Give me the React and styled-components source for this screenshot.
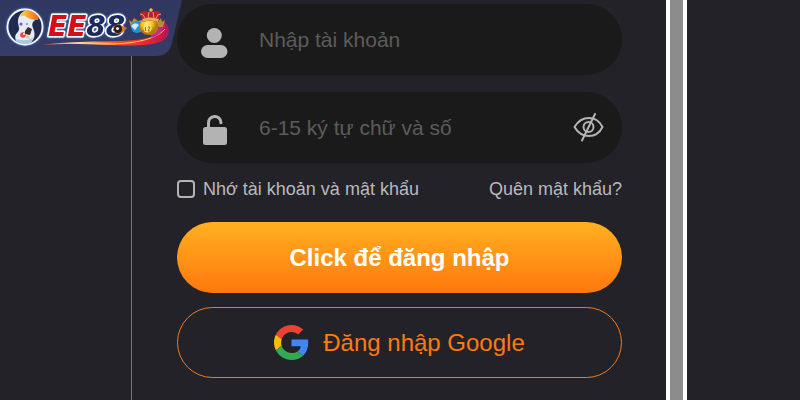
import React, { useState } from 'react';
import styled, { createGlobalStyle } from 'styled-components';

const GlobalStyle = createGlobalStyle`
  * {
    box-sizing: border-box;
  }
  body {
    margin: 0;
    background: #232228;
    font-family: "Liberation Sans", Arial, sans-serif;
  }
`;

const Page = styled.div`
  display: grid;
  grid-template-columns: 132fr 534fr 21px 113fr;
  min-height: 100vh;
  background: #232228;
`;

const Side = styled.aside`
  border-right: ${(props) => (props.$line ? '1px solid #77767a' : 'none')};
`;

const ScrollBar = styled.div`
  background: #8c8c8c;
  border: solid #fff;
  border-width: 0 4px;
`;

const Brand = styled.a`
  position: absolute;
  top: 0;
  left: 0;

  svg {
    display: block;
  }
`;

const Form = styled.form`
  display: flex;
  flex-direction: column;
  padding: 4px 44px 20px 45px;
`;

const Field = styled.div`
  display: flex;
  align-items: center;
  height: 71px;
  margin-bottom: 17px;
  padding: 0 17px 0 22px;
  border-radius: 36px;
  background: #1a1a1a;
`;

const FieldLabel = styled.label`
  display: flex;
  flex: none;
  width: 60px;
`;

const Input = styled.input`
  flex: 1;
  min-width: 0;
  padding: 0;
  border: none;
  outline: none;
  background: transparent;
  color: #ccc;
  font: 21px "Liberation Sans", Arial, sans-serif;

  &::placeholder {
    color: #5c5c5c;
    opacity: 1;
  }
`;

const IconButton = styled.button`
  display: flex;
  padding: 0;
  border: none;
  background: none;
  cursor: pointer;
`;

const Options = styled.div`
  display: flex;
  align-items: center;
  justify-content: space-between;
  margin-bottom: 24px;
  color: #b9b9bc;
  font-size: 18px;
  line-height: 18px;
`;

const Remember = styled.label`
  display: flex;
  align-items: center;
  gap: 8px;
`;

const Checkbox = styled.input`
  appearance: none;
  width: 18px;
  height: 18px;
  margin: 0;
  border: 2px solid #b4b4b6;
  border-radius: 4px;

  &:checked {
    background: #ff8a12;
  }
`;

const ForgotLink = styled.a`
  color: inherit;
  text-decoration: none;
`;

const Button = styled.button`
  display: flex;
  align-items: center;
  justify-content: center;
  gap: 14px;
  height: 71px;
  margin-bottom: 14px;
  border: none;
  border-radius: 36px;
  font: 24px "Liberation Sans", Arial, sans-serif;
  cursor: pointer;
`;

const LoginButton = styled(Button)`
  background: linear-gradient(#ffb020, #ff780e);
  color: #fff;
  font-weight: bold;
`;

const GoogleButton = styled(Button)`
  border: 1px solid #f0791c;
  background: transparent;
  color: #ff7a10;
`;

const UserIcon = () => (
  <svg width="32" height="38" viewBox="0 0 32 38" fill="#b3b3b3">
    <circle cx="15.300" cy="14.500" r="7.500" />
    <rect x="2" y="24" width="26.500" height="13" rx="6.500" />
  </svg>
);

const LockIcon = () => (
  <svg width="32" height="38" viewBox="0 0 32 38">
    <path
      d="M9.500 20V14a6.200 6.200 0 0 1 12.400-.8v.5"
      fill="none"
      stroke="#b3b3b3"
      strokeWidth="3"
      strokeLinecap="round"
    />
    <rect x="4" y="18" width="24" height="18" rx="2.500" fill="#b3b3b3" />
  </svg>
);

const EyeIcon = () => (
  <svg width="32" height="34" viewBox="0 0 32 34" fill="none" stroke="#b4b4b4" strokeWidth="2" strokeLinecap="round">
    <path d="M1.500 16C8.500 4 23.500 4 29.500 16C23.500 28 8.500 28 1.500 16Z" strokeLinejoin="round" />
    <circle cx="15.500" cy="16" r="5" />
    <path d="M22 3L9 29.500" />
  </svg>
);

const GoogleIcon = () => (
  <svg width="35" height="35" viewBox="0 0 48 48">
    <path fill="#ea4335" d="M24 9.500c3.540 0 6.710 1.220 9.210 3.600l6.850-6.850C35.900 2.380 30.470 0 24 0 14.620 0 6.510 5.380 2.560 13.220l7.980 6.190C12.430 13.720 17.740 9.500 24 9.500z" />
    <path fill="#4285f4" d="M46.980 24.550c0-1.570-.15-3.090-.38-4.550H24v9.020h12.940c-.58 2.960-2.260 5.480-4.780 7.180l7.730 6c4.510-4.180 7.090-10.360 7.090-17.650z" />
    <path fill="#fbbc05" d="M10.530 28.590c-.48-1.450-.76-2.990-.76-4.590s.27-3.140.76-4.590l-7.980-6.190C.92 16.460 0 20.120 0 24c0 3.880.92 7.540 2.560 10.780l7.970-6.190z" />
    <path fill="#34a853" d="M24 48c6.480 0 11.930-2.130 15.890-5.810l-7.730-6c-2.150 1.450-4.920 2.300-8.160 2.300-6.260 0-11.570-4.220-13.470-9.910l-7.980 6.190C6.510 42.620 14.620 48 24 48z" />
  </svg>
);

const Logo = () => (
  <svg width="190" height="58" viewBox="0 0 190 58">
    <defs>
      <linearGradient id="plate" x2="0" y2="1">
        <stop offset="0" stopColor="#303760" />
        <stop offset="1" stopColor="#353d68" />
      </linearGradient>
      <linearGradient id="swoosh">
        <stop offset="0" stopColor="#ef5a22" />
        <stop offset="0.300" stopColor="#ffd49a" />
        <stop offset="0.600" stopColor="#f4511e" />
        <stop offset="0.850" stopColor="#e52235" />
        <stop offset="1" stopColor="#b31656" />
      </linearGradient>
      <linearGradient id="cap">
        <stop offset="0.200" stopColor="#ffc02e" />
        <stop offset="1" stopColor="#ef5a1c" />
      </linearGradient>
      <radialGradient id="gold" cx="0.400" cy="0.300">
        <stop offset="0" stopColor="#fff27a" />
        <stop offset="0.600" stopColor="#f2bd18" />
        <stop offset="1" stopColor="#b87708" />
      </radialGradient>
      <clipPath id="disc">
        <circle cx="25" cy="27" r="17" />
      </clipPath>
      <filter id="glow" x="-20%" y="-20%" width="140%" height="140%">
        <feDropShadow dx="0" dy="0" stdDeviation="1.300" floodColor="#4fa4ff" />
      </filter>
    </defs>

    <path d="M0 0H182L172 43Q169 56 156 56H0Z" fill="url(#plate)" />

    {/* mascot badge */}
    <circle cx="25" cy="27" r="17.500" fill="#222a50" stroke="#f4faff" strokeWidth="1.800" filter="url(#glow)" />
    <g clipPath="url(#disc)">
      <path d="M18 22C18 12 27 7 39 12L38 18C33 21 31 23 33 28C37 37 33 44 23 44C16 44 13 37 17 33C21 29 18 26 18 22Z" fill="#e5ebf5" />
      <path d="M20 17C23 9 31 7 40 14L38 20Q29 20 25 16Q23 15 20 17Z" fill="url(#cap)" />
      <circle cx="21" cy="24" r="1.600" fill="#7c55c6" />
      <circle cx="27" cy="24" r="1" fill="#5b98c4" />
      <path d="M25 31L28 27L32 29L30 35L25 34Z" fill="#392b32" />
      <circle cx="23" cy="35" r="2.800" fill="#e8483c" />
      <circle cx="28" cy="37" r="2" fill="#f0c7a8" />
      <circle cx="24" cy="34" r="1" fill="#fff" />
      <path d="M16 39Q25 42 33 38L31 44H18Z" fill="#a9c8e6" />
    </g>

    {/* comet tail */}
    <path d="M42 45C82 39 122 44 147 38C160 34 166 28 162 20C171 25 172 37 160 42C137 50 91 41 42 45Z" fill="url(#swoosh)" />
    <path d="M85 43C122 46 154 42 165 29" fill="none" stroke="#ffce4f" strokeWidth="1" />
    <path d="M151 36Q161 33 162 24" fill="none" stroke="#bd2b9a" strokeWidth="4" />

    <text
      x="48"
      y="36"
      fontFamily="DejaVu Sans, sans-serif"
      fontWeight="bold"
      fontStyle="italic"
      fontSize="28"
      stroke="#fff"
      strokeWidth="3"
      strokeLinejoin="round"
      paintOrder="stroke"
      filter="url(#glow)"
    >
      <tspan fill="#d90d14">EE</tspan>
      <tspan fill="#1d2a5f">88</tspan>
    </text>

    <path d="M113 27L118 24L127 28L122 33L116 34Z" fill="#d17624" />
    <circle cx="118" cy="29" r="4" fill="#251b20" />
    <circle cx="117.500" cy="28.500" r="1.600" fill="#e9e1d7" />

    {/* crown and balls */}
    <path d="M129 20L132 22L134 18L138 21L142 20V27H131Z" fill="#c68d3f" />
    <path d="M155 21L158 22L161 18L162 22L165 20L163 27H155Z" fill="#bd8b3e" />
    <circle cx="137" cy="27" r="6" fill="#1e94df" />
    <path d="M131 26Q135 21 139 25L135 30Z" fill="#c5efff" />
    <ellipse cx="149" cy="27" rx="9.500" ry="8" fill="url(#gold)" />
    <circle cx="147.500" cy="28.500" r="4" fill="#ffe36a" />
    <path d="M145.500 27V31M148 27H150L148 31H150" fill="none" stroke="#9c7317" strokeWidth="1" />
    <path d="M140 14Q142 9 149 12L151 10L153 12Q159 9 161 14L158 22Q150 19 143 22Z" fill="#b8202e" />
    <path d="M140 14Q143 13 145 18M149 12L148 18M153 12L154 18M161 14Q158 13 156 18" fill="none" stroke="#e0a860" strokeWidth="1" />
    <path d="M143 22L142 19Q150 16 159 19L158 22Q150 19 143 22Z" fill="#dcae5a" />
    <circle cx="151" cy="10" r="1.800" fill="#e6b66a" />
  </svg>
);

const App = () => {
  const [account, setAccount] = useState('');
  const [pwd, setPwd] = useState('');
  const [showPwd, setShowPwd] = useState(false);

  const handleSubmit = (e) => {
    e.preventDefault();
  };

  return (
    <>
      <GlobalStyle />
      <Page>
        <Side $line />
        <main>
          <Form onSubmit={handleSubmit}>
            <Field>
              <FieldLabel htmlFor="account" aria-label="Nhập tài khoản">
                <UserIcon />
              </FieldLabel>
              <Input
                id="account"
                type="text"
                placeholder="Nhập tài khoản"
                autoComplete="off"
                value={account}
                onChange={(e) => setAccount(e.target.value)}
              />
            </Field>
            <Field>
              <FieldLabel htmlFor="password" aria-label="6-15 ký tự chữ và số">
                <LockIcon />
              </FieldLabel>
              <Input
                id="password"
                type={showPwd ? 'text' : 'password'}
                placeholder="6-15 ký tự chữ và số"
                value={pwd}
                onChange={(e) => setPwd(e.target.value)}
              />
              <IconButton type="button" aria-label="Mật khẩu" onClick={() => setShowPwd(!showPwd)}>
                <EyeIcon />
              </IconButton>
            </Field>
            <Options>
              <Remember htmlFor="remember">
                <Checkbox id="remember" type="checkbox" />
                Nhớ tài khoản và mật khẩu
              </Remember>
              <ForgotLink href="#">Quên mật khẩu?</ForgotLink>
            </Options>
            <LoginButton type="submit">Click để đăng nhập</LoginButton>
            <GoogleButton type="button">
              <GoogleIcon />
              Đăng nhập Google
            </GoogleButton>
          </Form>
        </main>
        <ScrollBar />
        <Side />
      </Page>
      <Brand href="#" aria-label="EE88">
        <Logo />
      </Brand>
    </>
  );
};

export default App;
